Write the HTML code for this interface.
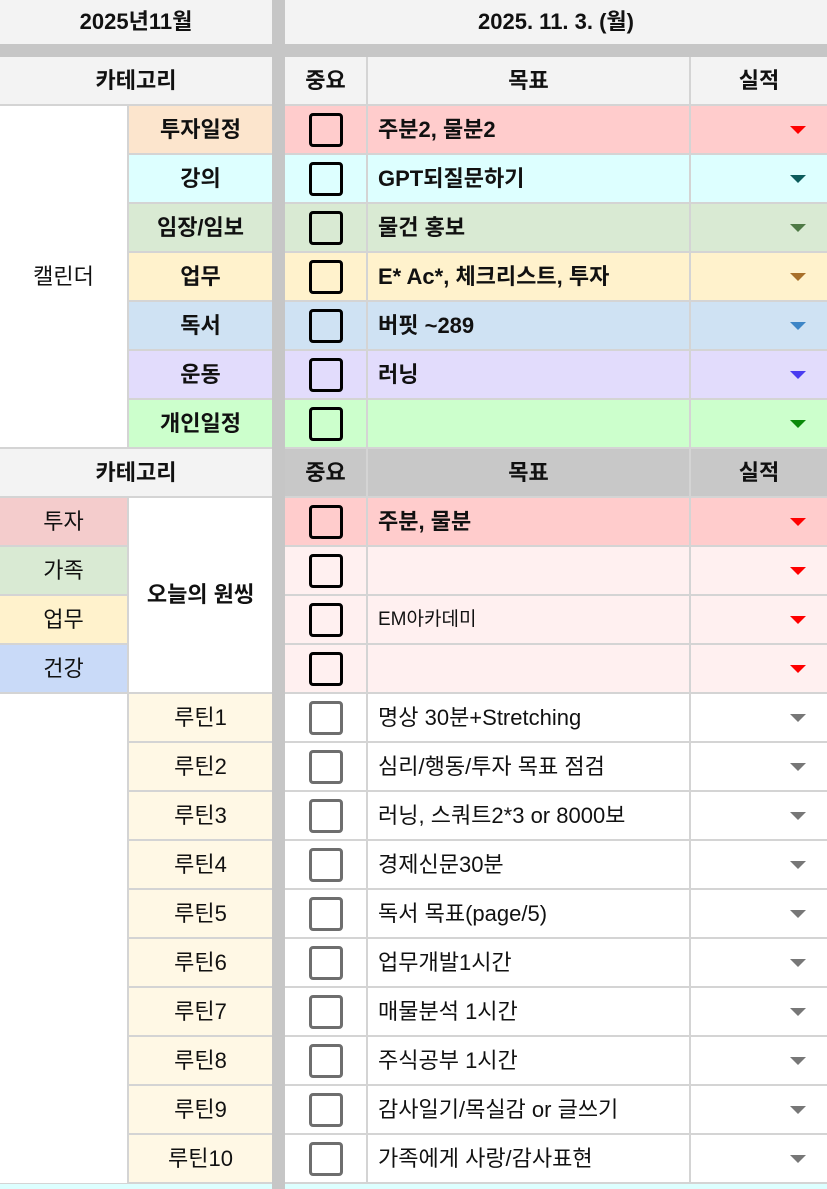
<!DOCTYPE html>
<html><head><meta charset="utf-8"><style>
body{margin:0;width:827px;height:1189px;background:#d4d4d4;position:relative;overflow:hidden;font-family:"Liberation Sans","Noto Sans CJK KR",sans-serif;color:#111}
.c{position:absolute;height:47px;line-height:47px;text-align:center;font-size:22px;white-space:nowrap;overflow:hidden}
.a{left:0;width:127px}.b{left:129px;width:143px}.k{left:285px;width:81px}
.g{left:368px;width:321px;text-align:left;padding-left:10px;box-sizing:border-box}
.r{left:691px;width:136px}
.bd{font-weight:bold}
.x{display:inline-block;width:28px;height:28px;border:3px solid #000;border-radius:4px;vertical-align:middle;margin-top:-2px}
.xg{border-color:#6e6e6e}
.t{position:absolute;right:21px;top:20px;width:0;height:0;border-left:8px solid transparent;border-right:8px solid transparent;border-top:8px solid #f00}
.sep{position:absolute;left:272px;width:13px;top:0;height:1189px;background:#c6c6c6}
</style></head><body>
<div class="sep"></div>
<div class="c bd" style="left:0;width:272px;top:0;height:44px;line-height:44px;background:#f3f3f3">2025년11월</div>
<div class="c bd" style="left:285px;width:542px;top:0;height:44px;line-height:44px;background:#f3f3f3">2025. 11. 3. (월)</div>
<div style="position:absolute;left:0;top:44px;width:827px;height:13px;background:#c6c6c6"></div>
<div class="sep" style="top:44px;height:13px"></div>

<div class="c bd" style="left:0;width:272px;top:57px;background:#f3f3f3">카테고리</div>
<div class="c k bd" style="top:57px;background:#f3f3f3">중요</div>
<div class="c g bd" style="top:57px;background:#f3f3f3;text-align:center;padding:0">목표</div>
<div class="c r bd" style="top:57px;background:#f3f3f3">실적</div>

<div class="c a" style="top:106px;height:341px;line-height:341px;background:#fff">캘린더</div>

<div class="c b bd" style="top:106px;background:#fce5cd">투자일정</div>
<div class="c k" style="top:106px;background:#ffcccc"><span class="x"></span></div>
<div class="c g bd" style="top:106px;background:#ffcccc">주분2, 물분2</div>
<div class="c r" style="top:106px;background:#ffcccc"><i class="t"></i></div>

<div class="c b bd" style="top:155px;background:#ddffff">강의</div>
<div class="c k" style="top:155px;background:#ddffff"><span class="x"></span></div>
<div class="c g bd" style="top:155px;background:#ddffff">GPT되질문하기</div>
<div class="c r" style="top:155px;background:#ddffff"><i class="t" style="border-top-color:#0c5c5c"></i></div>

<div class="c b bd" style="top:204px;background:#d9ead3">임장/임보</div>
<div class="c k" style="top:204px;background:#d9ead3"><span class="x"></span></div>
<div class="c g bd" style="top:204px;background:#d9ead3">물건 홍보</div>
<div class="c r" style="top:204px;background:#d9ead3"><i class="t" style="border-top-color:#4f7a46"></i></div>

<div class="c b bd" style="top:253px;background:#fff2cc">업무</div>
<div class="c k" style="top:253px;background:#fff2cc"><span class="x"></span></div>
<div class="c g bd" style="top:253px;background:#fff2cc">E* Ac*, 체크리스트, 투자</div>
<div class="c r" style="top:253px;background:#fff2cc"><i class="t" style="border-top-color:#a8702a"></i></div>

<div class="c b bd" style="top:302px;background:#cfe2f3">독서</div>
<div class="c k" style="top:302px;background:#cfe2f3"><span class="x"></span></div>
<div class="c g bd" style="top:302px;background:#cfe2f3">버핏 ~289</div>
<div class="c r" style="top:302px;background:#cfe2f3"><i class="t" style="border-top-color:#3d85c6"></i></div>

<div class="c b bd" style="top:351px;background:#e2dcfc">운동</div>
<div class="c k" style="top:351px;background:#e2dcfc"><span class="x"></span></div>
<div class="c g bd" style="top:351px;background:#e2dcfc">러닝</div>
<div class="c r" style="top:351px;background:#e2dcfc"><i class="t" style="border-top-color:#4a3cf0"></i></div>

<div class="c b bd" style="top:400px;background:#ccffcc">개인일정</div>
<div class="c k" style="top:400px;background:#ccffcc"><span class="x"></span></div>
<div class="c g bd" style="top:400px;background:#ccffcc"></div>
<div class="c r" style="top:400px;background:#ccffcc"><i class="t" style="border-top-color:#0a8a0a"></i></div>

<div class="c bd" style="left:0;width:272px;top:449px;background:#f3f3f3">카테고리</div>
<div class="c k bd" style="top:449px;background:#c8c8c8">중요</div>
<div class="c g bd" style="top:449px;background:#c8c8c8;text-align:center;padding:0">목표</div>
<div class="c r bd" style="top:449px;background:#c8c8c8">실적</div>

<div class="c a" style="top:498px;background:#f4cccc">투자</div>
<div class="c a" style="top:547px;background:#d9ead3">가족</div>
<div class="c a" style="top:596px;background:#fff2cc">업무</div>
<div class="c a" style="top:645px;background:#c9daf8">건강</div>
<div class="c b bd" style="top:498px;height:194px;line-height:194px;background:#fff">오늘의 원씽</div>

<div class="c k" style="top:498px;background:#ffcccc"><span class="x"></span></div>
<div class="c g bd" style="top:498px;background:#ffcccc">주분, 물분</div>
<div class="c r" style="top:498px;background:#ffcccc"><i class="t"></i></div>
<div class="c k" style="top:547px;background:#fff0f0"><span class="x"></span></div>
<div class="c g" style="top:547px;background:#fff0f0"></div>
<div class="c r" style="top:547px;background:#fff0f0"><i class="t"></i></div>
<div class="c k" style="top:596px;background:#fff0f0"><span class="x"></span></div>
<div class="c g" style="top:596px;background:#fff0f0;font-size:19px">EM아카데미</div>
<div class="c r" style="top:596px;background:#fff0f0"><i class="t"></i></div>
<div class="c k" style="top:645px;background:#fff0f0"><span class="x"></span></div>
<div class="c g" style="top:645px;background:#fff0f0"></div>
<div class="c r" style="top:645px;background:#fff0f0"><i class="t"></i></div>

<div class="c a" style="top:694px;height:489px;background:#fff"></div>
<div class="c b" style="top:694px;background:#fff8e5">루틴1</div><div class="c k" style="top:694px;background:#fff"><span class="x xg"></span></div><div class="c g" style="top:694px;background:#fff">명상 30분+Stretching</div><div class="c r" style="top:694px;background:#fff"><i class="t" style="border-top-color:#777"></i></div>
<div class="c b" style="top:743px;background:#fff8e5">루틴2</div><div class="c k" style="top:743px;background:#fff"><span class="x xg"></span></div><div class="c g" style="top:743px;background:#fff">심리/행동/투자 목표 점검</div><div class="c r" style="top:743px;background:#fff"><i class="t" style="border-top-color:#777"></i></div>
<div class="c b" style="top:792px;background:#fff8e5">루틴3</div><div class="c k" style="top:792px;background:#fff"><span class="x xg"></span></div><div class="c g" style="top:792px;background:#fff">러닝, 스쿼트2*3 or 8000보</div><div class="c r" style="top:792px;background:#fff"><i class="t" style="border-top-color:#777"></i></div>
<div class="c b" style="top:841px;background:#fff8e5">루틴4</div><div class="c k" style="top:841px;background:#fff"><span class="x xg"></span></div><div class="c g" style="top:841px;background:#fff">경제신문30분</div><div class="c r" style="top:841px;background:#fff"><i class="t" style="border-top-color:#777"></i></div>
<div class="c b" style="top:890px;background:#fff8e5">루틴5</div><div class="c k" style="top:890px;background:#fff"><span class="x xg"></span></div><div class="c g" style="top:890px;background:#fff">독서 목표(page/5)</div><div class="c r" style="top:890px;background:#fff"><i class="t" style="border-top-color:#777"></i></div>
<div class="c b" style="top:939px;background:#fff8e5">루틴6</div><div class="c k" style="top:939px;background:#fff"><span class="x xg"></span></div><div class="c g" style="top:939px;background:#fff">업무개발1시간</div><div class="c r" style="top:939px;background:#fff"><i class="t" style="border-top-color:#777"></i></div>
<div class="c b" style="top:988px;background:#fff8e5">루틴7</div><div class="c k" style="top:988px;background:#fff"><span class="x xg"></span></div><div class="c g" style="top:988px;background:#fff">매물분석 1시간</div><div class="c r" style="top:988px;background:#fff"><i class="t" style="border-top-color:#777"></i></div>
<div class="c b" style="top:1037px;background:#fff8e5">루틴8</div><div class="c k" style="top:1037px;background:#fff"><span class="x xg"></span></div><div class="c g" style="top:1037px;background:#fff">주식공부 1시간</div><div class="c r" style="top:1037px;background:#fff"><i class="t" style="border-top-color:#777"></i></div>
<div class="c b" style="top:1086px;background:#fff8e5">루틴9</div><div class="c k" style="top:1086px;background:#fff"><span class="x xg"></span></div><div class="c g" style="top:1086px;background:#fff">감사일기/목실감 or 글쓰기</div><div class="c r" style="top:1086px;background:#fff"><i class="t" style="border-top-color:#777"></i></div>
<div class="c b" style="top:1135px;background:#fff8e5">루틴10</div><div class="c k" style="top:1135px;background:#fff"><span class="x xg"></span></div><div class="c g" style="top:1135px;background:#fff">가족에게 사랑/감사표현</div><div class="c r" style="top:1135px;background:#fff"><i class="t" style="border-top-color:#777"></i></div>

<div style="position:absolute;left:0;top:1184px;width:827px;height:5px;background:#ddffff"></div>
<div class="sep" style="top:1184px;height:5px"></div>
</body></html>
